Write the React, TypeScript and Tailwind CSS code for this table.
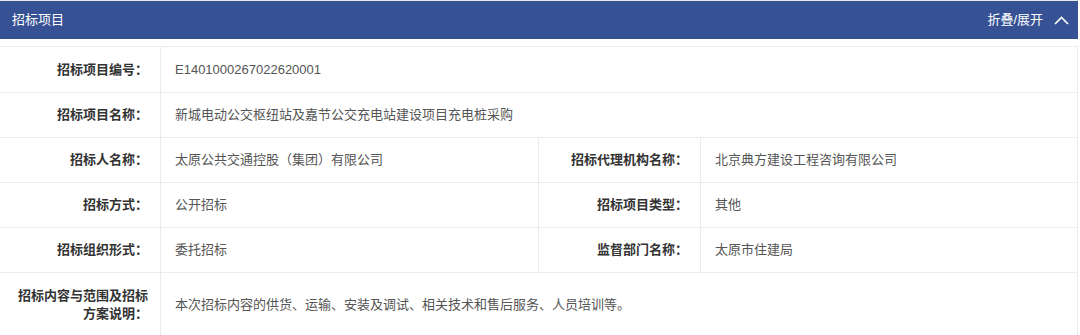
import React from "react";

const font = { fontFamily: '"Liberation Sans", "Noto Sans CJK SC", sans-serif' };

function Label({ children, h }: { children: React.ReactNode; h: string }) {
  return (
    <div className={`bg-white flex items-center justify-end text-right pr-[12px] pl-[12px] text-[13px] leading-[18px] font-bold text-[#333] ${h}`}>
      <span>{children}</span>
    </div>
  );
}

function Value({ children, h, span }: { children: React.ReactNode; h: string; span?: boolean }) {
  return (
    <div className={`bg-white flex items-center pl-[14px] pr-[12px] text-[13px] leading-[18px] text-[#555] ${h} ${span ? "col-span-3" : ""}`}>
      <span>{children}</span>
    </div>
  );
}

export default function App() {
  return (
    <div className="w-[1080px] h-[335px] overflow-hidden bg-white" style={font}>
      <div className="w-[1078px] border-t border-[#e6e6e6]">
        <div className="h-[38px] bg-[#365294] flex items-center justify-between pl-[12px] pr-[9px] text-white text-[13px]">
          <span>招标项目</span>
          <div className="flex items-center gap-[11px]">
            <span>折叠/展开</span>
            <svg width="15" height="9" viewBox="0 0 15 9" fill="none">
              <polyline points="1,8 7.5,1.5 14,8" stroke="white" strokeWidth="1.6" fill="none" />
            </svg>
          </div>
        </div>
        <div className="h-[7px] bg-white" />
        <div className="grid grid-cols-[160px_377px_161px_376px] gap-px bg-[#ebebeb] pt-px pr-px">
          <Label h="h-[45px]">招标项目编号：</Label>
          <Value h="h-[45px]" span>E1401000267022620001</Value>

          <Label h="h-[44px]">招标项目名称：</Label>
          <Value h="h-[44px]" span>新城电动公交枢纽站及嘉节公交充电站建设项目充电桩采购</Value>

          <Label h="h-[44px]">招标人名称：</Label>
          <Value h="h-[44px]">太原公共交通控股（集团）有限公司</Value>
          <Label h="h-[44px]">招标代理机构名称：</Label>
          <Value h="h-[44px]">北京典方建设工程咨询有限公司</Value>

          <Label h="h-[44px]">招标方式：</Label>
          <Value h="h-[44px]">公开招标</Value>
          <Label h="h-[44px]">招标项目类型：</Label>
          <Value h="h-[44px]">其他</Value>

          <Label h="h-[44px]">招标组织形式：</Label>
          <Value h="h-[44px]">委托招标</Value>
          <Label h="h-[44px]">监督部门名称：</Label>
          <Value h="h-[44px]">太原市住建局</Value>

          <Label h="h-[64px]">招标内容与范围及招标方案说明：</Label>
          <Value h="h-[64px]" span>本次招标内容的供货、运输、安装及调试、相关技术和售后服务、人员培训等。</Value>
        </div>
      </div>
    </div>
  );
}
